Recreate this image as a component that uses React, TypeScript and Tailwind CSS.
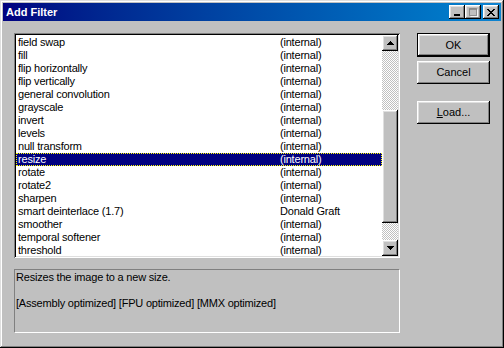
import React from 'react';

type Filter = { name: string; author: string };

const filters: Filter[] = [
    { name: 'field swap', author: '(internal)' },
    { name: 'fill', author: '(internal)' },
    { name: 'flip horizontally', author: '(internal)' },
    { name: 'flip vertically', author: '(internal)' },
    { name: 'general convolution', author: '(internal)' },
    { name: 'grayscale', author: '(internal)' },
    { name: 'invert', author: '(internal)' },
    { name: 'levels', author: '(internal)' },
    { name: 'null transform', author: '(internal)' },
    { name: 'resize', author: '(internal)' },
    { name: 'rotate', author: '(internal)' },
    { name: 'rotate2', author: '(internal)' },
    { name: 'sharpen', author: '(internal)' },
    { name: 'smart deinterlace (1.7)', author: 'Donald Graft' },
    { name: 'smoother', author: '(internal)' },
    { name: 'temporal softener', author: '(internal)' },
    { name: 'threshold', author: '(internal)' },
];

const raised = 'bg-[#c0c0c0] shadow-[inset_-1px_-1px_#000,inset_1px_1px_#fff,inset_-2px_-2px_#808080,inset_2px_2px_#dfdfdf]';

const TitleButton: React.FC<{ children: React.ReactNode; className?: string }> = ({ children, className = '' }) => (
    <div className={`w-[16px] h-[14px] flex items-center justify-center ${raised} ${className}`}>{children}</div>
);

const ScrollArrow: React.FC<{ up?: boolean }> = ({ up }) => (
    <div className={`w-[16px] h-[16px] flex items-center justify-center ${raised}`}>
        <svg width="7" height="4" viewBox="0 0 7 4" className={up ? '' : 'rotate-180'}>
            <path d="M3 0h1v1h1v1h1v1h1v1H0V3h1V2h1V1h1z" fill="#000" />
        </svg>
    </div>
);

const DialogButton: React.FC<{ children: React.ReactNode; isDefault?: boolean; className?: string }> = ({ children, isDefault, className = '' }) => (
    <div className={`w-[73px] ${isDefault ? 'h-[24px] border border-black' : 'h-[23px]'} ${className}`}>
        <div className={`w-full h-full flex items-center justify-center text-[11px] text-black ${raised}`}>{children}</div>
    </div>
);

const App: React.FC = () => {
    const selected = 'resize';

    return (
        <div
            className="w-[504px] h-[348px] bg-[#c0c0c0] p-[3px] flex flex-col shadow-[inset_-1px_-1px_#000,inset_1px_1px_#dfdfdf,inset_-2px_-2px_#808080,inset_2px_2px_#fff]"
            style={{ fontFamily: '"Liberation Sans", Arial, sans-serif' }}
        >
            {/* title bar */}
            <div className="h-[18px] flex items-center bg-gradient-to-r from-[#000080] to-[#1084d0] pl-[3px] pr-[2px]">
                <span className="text-white font-bold text-[11px] leading-none flex-1">Add Filter</span>
                <div className="flex items-center">
                    <TitleButton>
                        <div className="w-[6px] h-[2px] bg-black mt-[6px] mr-[1px]" />
                    </TitleButton>
                    <TitleButton>
                        <svg width="9" height="9" viewBox="0 0 10 10">
                            <path d="M0.5 0.5h8v8h-8z M0.5 1.5h8" fill="none" stroke="#808080" />
                            <path d="M1.5 9.5h8.5 M9.5 1.5v8" fill="none" stroke="#fff" />
                        </svg>
                    </TitleButton>
                    <TitleButton className="ml-[2px]">
                        <svg width="8" height="7" viewBox="0 0 8 7">
                            <path d="M0 0h2v1h1v1h2V1h1V0h2v1H7v1H6v1H5v1h1v1h1v1h1v1H6V6H5V5H3v1H2v1H0V6h1V5h1V4h1V3H2V2H1V1H0z" fill="#000" />
                        </svg>
                    </TitleButton>
                </div>
            </div>

            {/* body */}
            <div className="flex pl-[11px] pt-[12px]">
                <div className="w-[386px] flex flex-col">
                    {/* list box */}
                    <div className="h-[225px] bg-white p-[2px] flex shadow-[inset_1px_1px_#808080,inset_-1px_-1px_#fff,inset_2px_2px_#000,inset_-2px_-2px_#dfdfdf]">
                        <ul className="flex-1 overflow-hidden pt-[1px] text-[11px] tracking-[-0.2px] text-black">
                            {filters.map(f => {
                                const isSel = f.name === selected;
                                return (
                                    <li
                                        key={f.name}
                                        className={`h-[13px] leading-[11px] flex shrink-0 ${isSel ? 'bg-[#000080] text-white border border-dotted border-[#ffff00]' : 'border border-transparent'}`}
                                    >
                                        <span className="w-[263px] pl-[1px]">{f.name}</span>
                                        <span>{f.author}</span>
                                    </li>
                                );
                            })}
                        </ul>
                        <div className="w-[16px] flex flex-col">
                            <ScrollArrow up />
                            <div className="flex-1 flex flex-col bg-[repeating-conic-gradient(#c0c0c0_0_25%,#fff_0_50%)] bg-[length:2px_2px]">
                                <div className="h-[59px]" />
                                <div className={`h-[113px] ${raised}`} />
                            </div>
                            <ScrollArrow />
                        </div>
                    </div>

                    {/* description */}
                    <div className="mt-[11px] h-[64px] border border-t-[#808080] border-l-[#808080] border-b-white border-r-white pl-[1px] pt-[1px] text-[11px] leading-[13px] tracking-[-0.2px] text-black">
                        <p>Resizes the image to a new size.</p>
                        <p className="mt-[13px]">[Assembly optimized] [FPU optimized] [MMX optimized]</p>
                    </div>
                </div>

                {/* buttons */}
                <div className="ml-[17px] flex flex-col">
                    <DialogButton isDefault>OK</DialogButton>
                    <DialogButton className="mt-[4px]">Cancel</DialogButton>
                    <DialogButton className="mt-[17px]">
                        <span><span className="underline">L</span>oad...</span>
                    </DialogButton>
                </div>
            </div>
        </div>
    );
};

export default App;
